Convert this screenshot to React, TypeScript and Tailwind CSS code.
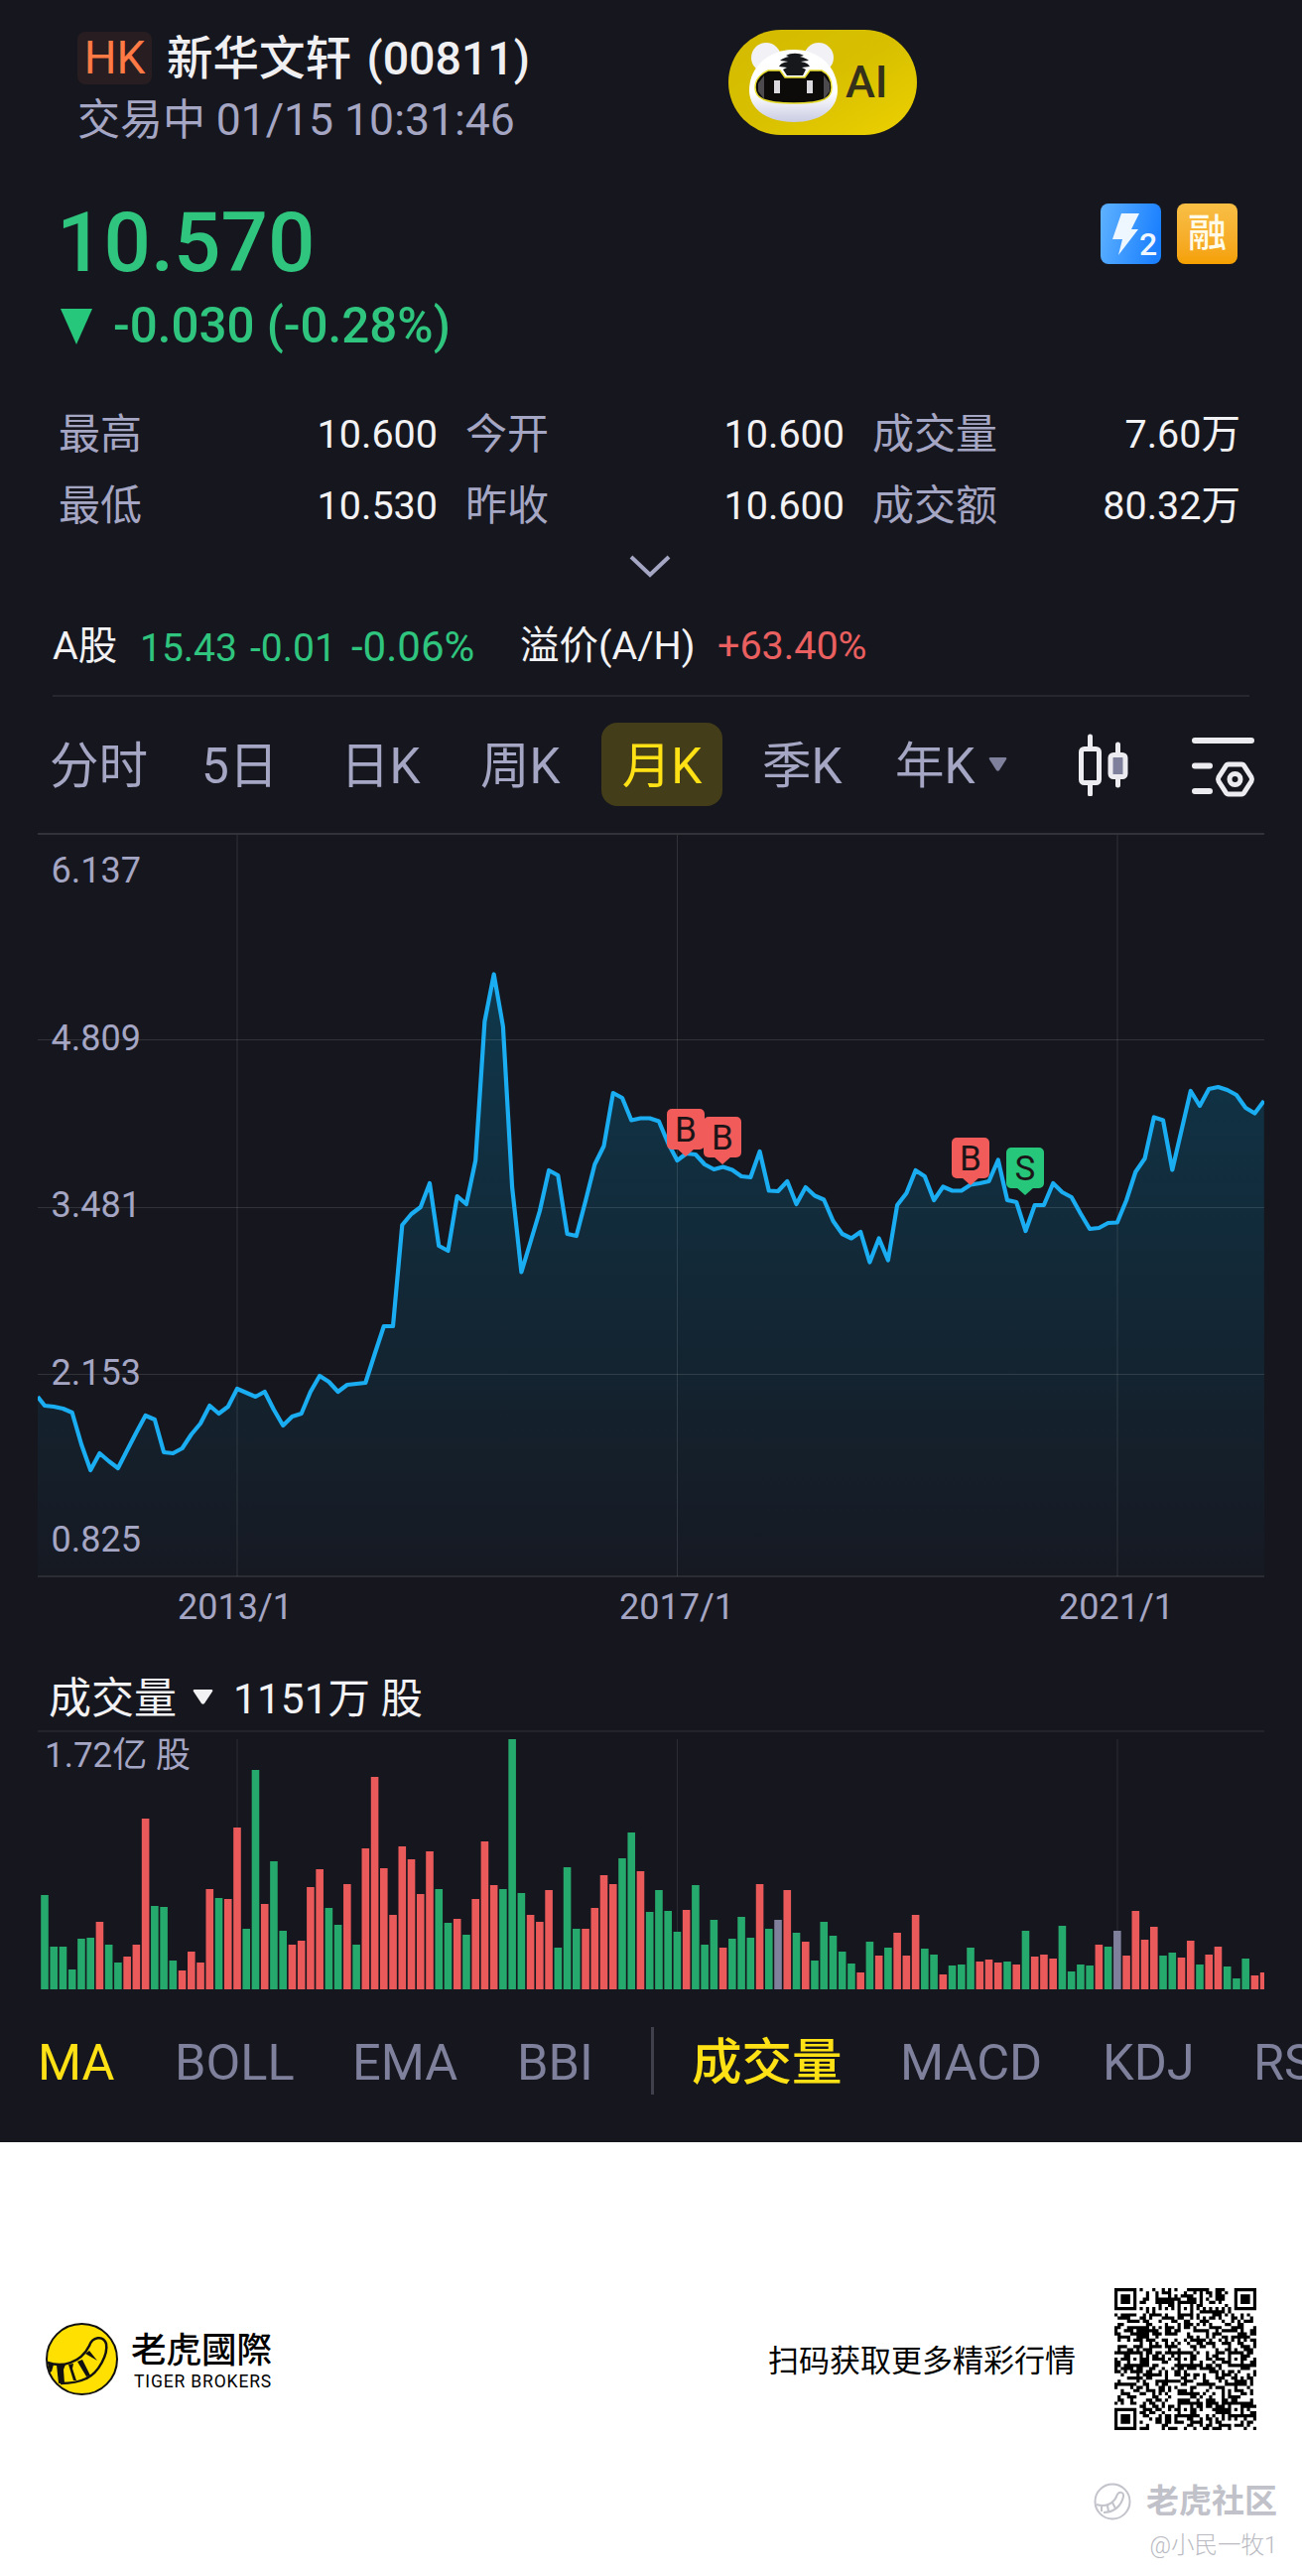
import React, { type JSX } from "react";
import { clsx } from "clsx";

const STEP = 9.238;
const FIRST_X = 7;
const CHART_W = 1236;

// y of every monthly close, measured from the top of the price chart
const PRICES = [
  578, 579, 581, 585, 617, 643, 626, 634, 641, 623, 605, 588, 592, 625, 626,
  621, 607, 596, 578, 586, 579, 561, 565, 569, 564, 582, 598, 589, 586, 564,
  548, 554, 564, 557, 556, 555, 526, 498, 498, 396, 385, 378, 354, 417, 422,
  367, 375, 331, 191, 143.5, 196, 358, 443.5, 413, 382, 341, 346, 405, 407,
  372, 335, 316.5, 263, 268, 290.5, 288.5, 288.5, 291.5, 313.5, 331, 324, 325,
  335, 340, 337.5, 340.5, 347, 348, 322, 361.5, 362, 352, 375, 358, 366.5,
  370.5, 392, 405, 409.5, 403, 433.5, 409.5, 431.5, 376, 364, 341, 347, 371,
  357.5, 361.5, 361.5, 355.5, 354, 352, 330.5, 371, 373, 402, 376, 376, 354,
  363, 368, 384.5, 400, 399, 394, 393.5, 371, 342.5, 329, 287.5, 290.5, 340.5,
  301, 261, 276, 259, 257, 260, 265, 278, 283.5, 271,
];

const VOLUMES =
  "g95 g43 g43 g20 g51 g52 r68 g45 g27 r33 r45 r172 g84 g83 g29 r19 r38 r27 r101 g92 r91 r163 g61 g221 r86 g129 g59 r45 r49 r103 r121 g82 g65 r106 g45 r142 r214 r122 r75 r144 r131 r96 r139 g101 g67 r71 g55 r91 r149 r105 g101 g252 g97 r75 r68 r100 g42 g123 g61 r61 r82 r115 r106 g132 g158 r119 g78 g100 g79 g58 r80 g105 g45 g70 r42 g51 g73 g52 r106 g61 n70 r100 g57 r48 g29 g68 g54 g38 g26 r17 g48 r34 g42 r57 r34 r75 g41 g35 r15 g24 g25 g42 r28 r30 r27 g28 r25 g59 r33 r35 r31 g64 g18 g25 g24 r45 g43 n59 r34 r79 r50 r63 g34 g37 r32 r49 g25 r35 r43 g23 g11 g31 r14 r17"
    .split(" ")
    .map((item) => ({ kind: item[0], height: Number(item.slice(1)) }));

const BAR_FILL: Record<string, string> = {
  g: "#26a96c",
  r: "#ea5a5a",
  n: "#7f819c",
};

const QUOTES = [
  ["最高", "10.600"],
  ["今开", "10.600"],
  ["成交量", "7.60万"],
  ["最低", "10.530"],
  ["昨收", "10.600"],
  ["成交额", "80.32万"],
];

const GRID_X = [201, 644.5, 1088];

function Header(): JSX.Element {
  return (
    <header className="flex h-[170px] items-start justify-between pl-[78px] pr-[388px] pt-[30px]">
      <div>
        <div className="flex h-[56px] items-center gap-[15px]">
          <span className="flex h-[53px] w-[75px] items-center justify-center rounded-lg bg-[#281d20] text-[46px] text-[#ff7a45]">
            HK
          </span>
          <h1 className="whitespace-nowrap pt-[2px] text-[46.500px] font-medium leading-[56px] text-[#f0f0f2] [word-spacing:4px]">
            新华文轩 (00811)
          </h1>
        </div>
        <p className="mt-[7px] text-[43px] leading-[56px] text-[#a5a6c4]">
          交易中 <span className="text-[44.500px]">01/15 10:31:46</span>
        </p>
      </div>
      <div className="flex h-[106px] w-[190px] items-center rounded-full bg-gradient-to-br from-[#d3ba00] via-[#d8c000] to-[#ecd000] pl-[20px]">
        <TigerFace />
        <span className="ml-[6px] text-[45px] font-medium text-[#35301a]">
          AI
        </span>
      </div>
    </header>
  );
}

function TigerFace(): JSX.Element {
  return (
    <svg width="92" height="82" viewBox="0 0 92 82">
      <defs>
        <linearGradient id="face" x1="0" y1="0" x2="0" y2="1">
          <stop offset="0.6" stopColor="#ffffff" />
          <stop offset="1" stopColor="#c9cbe2" />
        </linearGradient>
      </defs>
      <circle cx="18" cy="16" r="15" fill="#f1f1f6" />
      <circle cx="71" cy="16" r="15" fill="#f1f1f6" />
      <path
        d="M46 8C72 8 90 26 90 49c0 20-19 32-44 32S1 69 1 49C1 26 20 8 46 8Z"
        fill="url(#face)"
      />
      <path
        d="M20 29h12l5 7h20l5-7h12c6 3 10 9 10 17 0 10-6 16-38 16S7 56 7 46c0-8 6-14 13-17Z"
        fill="#0d0b0a"
        stroke="#e6dc2c"
        strokeWidth="1.5"
      />
      <path
        d="M38 14c5-3 13-3 18 0l-4 1c4 1 7 2 9 4l-8 1c5 1 7 2 9 5l-8 1 4 2-3 6H39l-4-6 4-2-8-1c2-3 4-4 9-5l-8-1c2-2 5-3 9-4Z"
        fill="#17181c"
      />
      <path d="M10 42l6-8v24l-6-8Z M82 42l-6-8v24l6-8Z" fill="#4c4a4c" />
      <rect x="26" y="39" width="6" height="13" fill="#d9d9de" />
      <rect x="59" y="39" width="6" height="13" fill="#d9d9de" />
    </svg>
  );
}

function Price(): JSX.Element {
  return (
    <section className="flex h-[230px] justify-between pl-[60px] pr-[65px]">
      <div className="text-[#2fc57e]">
        <div className="-ml-[3px] mt-[27px] text-[83.500px] font-medium leading-[96px]">
          10.570
        </div>
        <div className="mt-[6px] flex h-[60px] items-center gap-[20px] whitespace-nowrap text-[49.300px] font-medium">
          <svg width="34" height="36" viewBox="0 0 34 36">
            <path d="M1 0h32L17 36Z" fill="#27c77b" />
          </svg>
          -0.030 (-0.28%)
        </div>
      </div>
      <div className="flex gap-[16px] pt-[35px]">
        <svg width="61" height="61" viewBox="0 0 61 61">
          <defs>
            <linearGradient id="blue" x1="0" y1="0.2" x2="1" y2="0.4">
              <stop offset="0" stopColor="#5cb0ff" />
              <stop offset="1" stopColor="#1b80ff" />
            </linearGradient>
          </defs>
          <rect width="61" height="61" rx="8" fill="url(#blue)" />
          <path d="M21 10h18l-8 16h7L18 52l4-16h-10Z" fill="#eef6ff" />
          <text x="39" y="52" fontSize="32" fontWeight="500" fill="#eef6ff">
            2
          </text>
        </svg>
        <span className="flex h-[61px] w-[61px] items-center justify-center rounded-lg bg-gradient-to-b from-[#f8bf45] to-[#f5a100] text-[39px] font-medium leading-none text-[#fffbe8]">
          融
        </span>
      </div>
    </section>
  );
}

function Quotes(): JSX.Element {
  return (
    <section className="flex h-[202px] flex-col items-center pl-[59px] pr-[62px] pt-[2px]">
      <dl className="grid w-full grid-cols-[382px_382px_1fr] gap-x-[28px] text-[42px] leading-[72px]">
        {QUOTES.map(([label, value]) => (
          <div key={label} className="flex justify-between">
            <dt className="text-[#a5a6c4]">{label}</dt>
            <dd className="text-[39.500px] text-[#f2f2f4]">{value}</dd>
          </div>
        ))}
      </dl>
      <svg className="mt-[12px]" width="44" height="26" viewBox="0 0 44 26">
        <path
          d="M3 3l19 18L41 3"
          fill="none"
          stroke="#a5a6c4"
          strokeWidth="4"
        />
      </svg>
    </section>
  );
}

function Premium(): JSX.Element {
  return (
    <section className="mx-[53px] flex h-[100px] items-center whitespace-nowrap border-b-2 border-[#26272f] text-[39.500px] text-[#f2f2f4]">
      <span className="w-[88px]">A股</span>
      <span className="flex w-[383px] items-baseline text-[#2fc57e]">
        <span className="w-[111px] text-[39px]">15.43</span>
        <span className="w-[102px] text-[39px]">-0.01</span>
        <span className="text-[42px]">-0.06%</span>
      </span>
      <span className="w-[199px]">溢价(A/H)</span>
      <span className="text-[#ea5f5f]">+63.40%</span>
    </section>
  );
}

function Periods(): JSX.Element {
  return (
    <nav className="flex h-[136px] items-center whitespace-nowrap pl-[50px] text-[49.500px] text-[#a5a6c4]">
      <span className="w-[153px] pt-[5px]">分时</span>
      <span className="w-[140px] pt-[5px]">5日</span>
      <span className="w-[141px] pt-[5px]">日K</span>
      <span className="w-[122px] pt-[5px]">周K</span>
      <span className="flex h-[84px] w-[122px] items-center justify-center rounded-2xl bg-[#443d19] pt-[5px] text-[#ffe115]">
        月K
      </span>
      <span className="ml-[40px] w-[134px] pt-[5px]">季K</span>
      <span className="w-[94px] pt-[5px]">年K</span>
      <svg className="" width="19" height="14" viewBox="0 0 19 14">
        <path d="M2 0h15q2 0 1 2l-7 11q-1.500 1.500-3 0L1 2Q0 0 2 0Z" fill="#7f819c" />
      </svg>
      <svg className="ml-[70px]" width="52" height="64" viewBox="0 0 52 64">
        <g stroke="#ececf0" strokeWidth="5" strokeLinecap="round" fill="none">
          <path d="M13.500 4v58M41.500 12v41" />
          <rect x="4.500" y="16.500" width="18" height="34" rx="3" fill="#16171e" />
          <rect x="34" y="22.500" width="15" height="22" rx="3" fill="#7f819c" />
        </g>
      </svg>
      <svg className="ml-[62px] mt-[6px]" width="68" height="64" viewBox="0 0 68 64">
        <g stroke="#ececf0" strokeWidth="6" strokeLinecap="round" fill="none">
          <path d="M5 5h57M5 30.500h15M5 56h15" />
          <path
            d="M39 29h13q2 0 3 2l7 11q1 2 0 4l-7 11q-1 2-3 2H39q-2 0-3-2l-7-11q-1-2 0-4l7-11q1-2 3-2Z"
            strokeWidth="5"
          />
          <circle cx="45.500" cy="44" r="5.500" strokeWidth="5" />
        </g>
      </svg>
    </nav>
  );
}

function Marker({
  x,
  y,
  type,
}: {
  x: number;
  y: number;
  type: "B" | "S";
}): JSX.Element {
  const fill = type === "B" ? "#f15b5a" : "#27c77b";
  return (
    <g transform={`translate(${x} ${y})`}>
      <rect width="38" height="41" rx="5" fill={fill} />
      <path d="M10 40h18l-9 8Z" fill={fill} />
      <text x="19" y="33" fontSize="35" textAnchor="middle" fill="#1b1518">
        {type}
      </text>
    </g>
  );
}

function PriceChart(): JSX.Element {
  const points = PRICES.map(
    (y, i) => `${(FIRST_X + i * STEP).toFixed(1)},${y}`,
  ).join(" ");
  const line = `0,569 ${points}`;

  return (
    <svg
      className="ml-[38px] block"
      width={CHART_W}
      height="830"
      viewBox={`0 0 ${CHART_W} 830`}
    >
      <defs>
        <linearGradient
          id="area"
          gradientUnits="userSpaceOnUse"
          x1="0"
          y1="140"
          x2="0"
          y2="750"
        >
          <stop offset="0" stopColor="#0f384c" />
          <stop offset="1" stopColor="#161922" />
        </linearGradient>
      </defs>
      <polygon points={`${line} ${CHART_W},750 0,750`} fill="url(#area)" />
      <g stroke="#ffffff" strokeOpacity="0.12">
        <path d={`M0 2h${CHART_W}`} strokeWidth="2" />
        <path d={`M0 209.500h${CHART_W}M0 378.500h${CHART_W}M0 546.500h${CHART_W}`} />
        <path d={`M0 750h${CHART_W}`} strokeWidth="1.500" />
        {GRID_X.map((x) => (
          <path key={x} d={`M${x} 3V750`} />
        ))}
      </g>
      <polyline
        points={line}
        fill="none"
        stroke="#1badf2"
        strokeWidth="4.200"
        strokeLinejoin="round"
      />
      <Marker x={634} y={279} type="B" />
      <Marker x={671} y={287} type="B" />
      <Marker x={921} y={308} type="B" />
      <Marker x={976} y={318} type="S" />
      <g fontSize="36" fill="#a5a6c4">
        <text x="13.500" y="51">6.137</text>
        <text x="13.500" y="220">4.809</text>
        <text x="13.500" y="388">3.481</text>
        <text x="13.500" y="557">2.153</text>
        <text x="13.500" y="725">0.825</text>
        <g textAnchor="middle">
          <text x="199" y="793">2013/1</text>
          <text x="644" y="793">2017/1</text>
          <text x="1087" y="793">2021/1</text>
        </g>
      </g>
    </svg>
  );
}

function VolumeChart(): JSX.Element {
  return (
    <section className="mx-[38px] h-[340px]">
      <div className="flex h-[77px] items-center whitespace-nowrap border-b-2 border-[#22232b] pl-[11px] pt-[12px] text-[43px] text-[#f2f2f4]">
        成交量
        <svg className="-mt-[4px] ml-[16px] mr-[20px]" width="21" height="15" viewBox="0 0 21 15">
          <path d="M2 0h17q2 0 1 2l-8 12q-1.500 1.500-3 0L1 2Q0 0 2 0Z" fill="#f2f2f4" />
        </svg>
        <span className="text-[42.500px]">1151万 股</span>
      </div>
      <svg
        className="block"
        width={CHART_W}
        height="260"
        viewBox={`0 0 ${CHART_W} 260`}
      >
        {GRID_X.map((x) => (
          <path key={x} d={`M${x} 7V259`} stroke="#2c2d34" />
        ))}
        {VOLUMES.map(({ kind, height }, i) => (
          <rect
            key={i}
            x={FIRST_X + i * STEP - 3.8}
            y={259 - height}
            width="7.600"
            height={height}
            fill={BAR_FILL[kind]}
          />
        ))}
        <text x="7" y="35" fontSize="35" fill="#a5a6c4">
          1.72亿 股
        </text>
      </svg>
    </section>
  );
}

function Indicators(): JSX.Element {
  const item = "shrink-0 text-[#7f819c]";
  return (
    <nav className="flex h-[150px] items-center overflow-hidden whitespace-nowrap pb-[10px] pl-[38px] text-[50.500px]">
      <span className="w-[138px] shrink-0 text-[#ffe115]">MA</span>
      <span className={clsx(item, "w-[179px]")}>BOLL</span>
      <span className={clsx(item, "w-[166px]")}>EMA</span>
      <span className={clsx(item, "w-[135px]")}>BBI</span>
      <span className="-mt-[4px] h-[68px] w-[3px] shrink-0 bg-[#3f404b]" />
      <span className="ml-[38px] w-[210px] shrink-0 font-medium text-[#ffe115]">
        成交量
      </span>
      <span className={clsx(item, "w-[204px]")}>MACD</span>
      <span className={clsx(item, "w-[152px]")}>KDJ</span>
      <span className={item}>RSI</span>
    </nav>
  );
}

const QR_SIZE = 45;
const QR_ALIGN = [
  [22, 6],
  [6, 22],
  [22, 22],
  [38, 22],
  [22, 38],
  [38, 38],
];

function isDark(x: number, y: number): boolean {
  for (const [fx, fy] of [
    [0, 0],
    [QR_SIZE - 7, 0],
    [0, QR_SIZE - 7],
  ]) {
    const d = Math.max(Math.abs(x - fx - 3), Math.abs(y - fy - 3));
    if (d <= 4) return d !== 2 && d !== 4;
  }
  for (const [ax, ay] of QR_ALIGN) {
    const d = Math.max(Math.abs(x - ax), Math.abs(y - ay));
    if (d <= 2) return d !== 1;
  }
  if (y === 6) return x % 2 === 0;
  if (x === 6) return y % 2 === 0;
  const n = Math.sin(x * 12.9898 + y * 78.233) * 43758.5453;
  return n - Math.floor(n) < 0.52;
}

function QrCode(): JSX.Element {
  let d = "";
  for (let y = 0; y < QR_SIZE; y++) {
    for (let x = 0; x < QR_SIZE; x++) {
      if (isDark(x, y)) d += `M${x} ${y}h1v1h-1z`;
    }
  }
  return (
    <svg width="143" height="143" viewBox={`0 0 ${QR_SIZE} ${QR_SIZE}`}>
      <path d={d} fill="#000" />
    </svg>
  );
}

function Footer(): JSX.Element {
  return (
    <footer className="flex h-[437px] flex-col bg-white text-black">
      <div className="mt-[147px] flex h-[143px] items-center pl-[46px]">
        <svg width="73" height="73" viewBox="0 0 73 73">
          <circle cx="36.500" cy="36.500" r="35.500" fill="#ffe000" stroke="#111" strokeWidth="2" />
          <path
            d="M2 40c14 5 33 1 42-17 3-9 14-11 17-2 2 10-7 29-20 35-10 5-19 5-26 5"
            fill="none"
            stroke="#111"
            strokeWidth="2.500"
          />
          <path
            d="M2 39l6 3-2 7-2 1ZM11 42h9l-2 5 1 14h-6ZM23 42l5-1-1 5 4 12h-3ZM32 39l5-2 8 16-4 1ZM40 31l4-3 8 10Z"
            fill="#111"
          />
        </svg>
        <div className="ml-[13px] w-[642px] pt-[3px]">
          <div className="text-[35.500px] font-medium leading-[40px] [font-family:Roboto,'Noto_Sans_CJK_TC',sans-serif]">
            老虎國際
          </div>
          <div className="ml-[3px] mt-[1px] text-[17.500px] leading-[20px] tracking-[0.850px]">
            TIGER BROKERS
          </div>
        </div>
        <span className="w-[349px] whitespace-nowrap pt-[6px] text-[31px]">
          扫码获取更多精彩行情
        </span>
        <QrCode />
      </div>
      <div className="mt-[47px] flex flex-col items-end pr-[25px] text-[#b9bac2]">
        <div className="flex h-[50px] items-center gap-[15px] text-[33px] font-bold text-[#c0c1c9]">
          <svg width="38" height="38" viewBox="0 0 38 38">
            <g fill="none" stroke="#c2c3cb" strokeWidth="2">
              <circle cx="19" cy="19" r="17.500" />
              <path d="M3 22c9 3 17-1 20-8 2-6 8-5 7 0-2 9-9 16-20 16M8 23v6M14 23l1 6M19 20l3 6" />
            </g>
          </svg>
          老虎社区
        </div>
        <div className="h-[36px] text-[23.500px] font-light leading-[38px]">
          @小民一牧1
        </div>
      </div>
    </footer>
  );
}

export default function App(): JSX.Element {
  return (
    <main className="h-[2595px] w-[1312px] overflow-hidden bg-[#16171e] [font-family:Roboto,'Noto_Sans_CJK_SC',sans-serif]">
      <Header />
      <Price />
      <Quotes />
      <Premium />
      <Periods />
      <PriceChart />
      <VolumeChart />
      <Indicators />
      <Footer />
    </main>
  );
}
